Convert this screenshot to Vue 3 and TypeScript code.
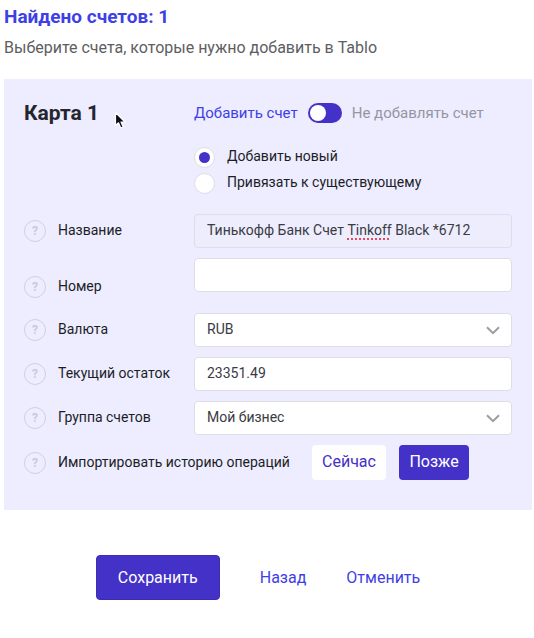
<script setup lang="ts">
import { ref } from 'vue'

type Mode = 'new' | 'existing'

const skipAccount = ref<boolean>(false)
const mode = ref<Mode>('new')
const name = ref<string>('Тинькофф Банк Счет Tinkoff Black *6712')
const accountNumber = ref<string>('')
const currency = ref<string>('RUB')
const balance = ref<string>('23351.49')
const group = ref<string>('Мой бизнес')
const importNow = ref<boolean>(false)
</script>

<template>
  <main class="page">
    <h1 class="heading">Найдено счетов: 1</h1>
    <p class="lead">Выберите счета, которые нужно добавить в Tablo</p>

    <form id="account-form" class="card" @submit.prevent>
      <div class="card-head">
        <h2 class="card-title">Карта 1</h2>
        <label class="switch-row">
          <span class="switch-on">Добавить счет</span>
          <input v-model="skipAccount" class="switch" type="checkbox" role="switch" />
          <span class="switch-off">Не добавлять счет</span>
        </label>
        <svg class="cursor" width="13" height="19" viewBox="0 0 13 19" aria-hidden="true">
          <path d="M1.5 1.5V14.5L4.5 11.8L6.8 17L9.2 16L7 11H11Z" fill="#0c0c18" stroke="#fff" stroke-width="1.2" stroke-linejoin="round" />
        </svg>
      </div>

      <div class="modes">
        <label class="mode">
          <input v-model="mode" class="radio" type="radio" name="mode" value="new" />
          <span class="mode-text">Добавить новый</span>
        </label>
        <label class="mode">
          <input v-model="mode" class="radio" type="radio" name="mode" value="existing" />
          <span class="mode-text">Привязать к существующему</span>
        </label>
      </div>

      <div class="rows">
        <div class="row">
          <button class="help" type="button">?</button>
          <label class="label" for="name">Название</label>
          <div class="field-box">
            <input id="name" v-model="name" class="field field-muted" type="text" spellcheck="false" />
            <div class="spelling" aria-hidden="true">Тинькофф Банк Счет <span class="misspelled">Tinkoff</span></div>
          </div>
        </div>
        <div class="row row-tall">
          <button class="help" type="button">?</button>
          <label class="label" for="number">Номер</label>
          <input id="number" v-model="accountNumber" class="field" type="text" />
        </div>
        <div class="row">
          <button class="help" type="button">?</button>
          <label class="label" for="currency">Валюта</label>
          <div class="field-box">
            <select id="currency" v-model="currency" class="field">
              <option>RUB</option>
            </select>
            <svg class="chevron" width="14" height="9" viewBox="0 0 14 9" aria-hidden="true"><path d="M1 1.2L7 7.2L13 1.2" /></svg>
          </div>
        </div>
        <div class="row">
          <button class="help" type="button">?</button>
          <label class="label" for="balance">Текущий остаток</label>
          <input id="balance" v-model="balance" class="field" type="text" />
        </div>
        <div class="row">
          <button class="help" type="button">?</button>
          <label class="label" for="group">Группа счетов</label>
          <div class="field-box">
            <select id="group" v-model="group" class="field">
              <option>Мой бизнес</option>
            </select>
            <svg class="chevron" width="14" height="9" viewBox="0 0 14 9" aria-hidden="true"><path d="M1 1.2L7 7.2L13 1.2" /></svg>
          </div>
        </div>
        <div class="import-row" role="group" aria-labelledby="import-label">
          <button class="help" type="button">?</button>
          <span id="import-label" class="label import-label">Импортировать историю операций</span>
          <button class="choice" :class="{ chosen: importNow }" type="button" @click="importNow = true">Сейчас</button>
          <button class="choice choice-later" :class="{ chosen: !importNow }" type="button" @click="importNow = false">Позже</button>
        </div>
      </div>
    </form>

    <div class="actions">
      <button class="save" type="submit" form="account-form">Сохранить</button>
      <a class="link" href="#back">Назад</a>
      <a class="link" href="#cancel">Отменить</a>
    </div>
  </main>
</template>

<style>
body {
  background: #fff;
}
</style>

<style scoped>
.page {
  padding: 4px 2px 36px 4px;
  font-family: Roboto, "Noto Sans", sans-serif;
  font-size: 14px;
  line-height: 20px;
  color: #1c1d26;
}

.page * {
  box-sizing: border-box;
}

.heading {
  margin: 0;
  font-size: 19px;
  line-height: 26px;
  font-weight: 700;
  color: #3f3fe6;
}

.lead {
  margin: 6px 0 19px;
  font-size: 16px;
  line-height: 24px;
  color: #5d5e62;
}

.card {
  padding: 20px 20px 30px;
  background: #ededff;
}

.card-head {
  position: relative;
  display: grid;
  grid-template-columns: 158px 1fr;
  column-gap: 12px;
  align-items: center;
}

.card-title {
  margin: 0;
  font-size: 21px;
  line-height: 28px;
  font-weight: 700;
  color: #24252e;
}

.cursor {
  position: absolute;
  left: 90px;
  top: 12px;
}

.switch-row {
  display: flex;
  align-items: center;
  gap: 10px;
  font-size: 15px;
  white-space: nowrap;
}

.switch-on {
  color: #3f3fe6;
}

.switch-off {
  color: #94959f;
}

.switch {
  appearance: none;
  display: flex;
  flex: none;
  width: 34px;
  height: 20px;
  margin: 0;
  padding: 2px;
  border-radius: 10px;
  background: #4431c8;
}

.switch::before {
  content: "";
  width: 16px;
  height: 16px;
  border-radius: 50%;
  background: #fff;
}

.switch:checked {
  justify-content: flex-end;
}

.modes {
  display: grid;
  row-gap: 4px;
  margin: 19px 0 20px 170px;
}

.mode {
  display: flex;
  align-items: center;
  gap: 12px;
  height: 22px;
}

.radio {
  appearance: none;
  display: grid;
  place-items: center;
  flex: none;
  width: 21px;
  height: 21px;
  margin: 0;
  border: 1px solid #dcdce6;
  border-radius: 50%;
  background: #fff;
}

.radio:checked::before {
  content: "";
  width: 11px;
  height: 11px;
  border-radius: 50%;
  background: #4431c8;
}

.rows {
  display: grid;
  row-gap: 10px;
}

.row {
  display: grid;
  grid-template-columns: 22px 124px 1fr;
  column-gap: 12px;
  align-items: center;
}

.row-tall {
  height: 45px;
  align-items: end;
}

.row-tall .field {
  align-self: start;
}

.row-tall .help,
.row-tall .label {
  margin-bottom: 5px;
}

.help {
  flex: none;
  width: 22px;
  height: 22px;
  padding: 0;
  border: 1px solid #d0d0de;
  border-radius: 50%;
  background: transparent;
  font: 700 12px/20px Roboto, sans-serif;
  text-align: center;
  color: #c9c9d8;
}

.label,
.mode-text {
  padding-bottom: 2px;
  white-space: nowrap;
}

.field-box {
  position: relative;
}

.field {
  appearance: none;
  display: block;
  width: 100%;
  height: 34px;
  margin: 0;
  padding: 0 12px 2px;
  border: 1px solid #dfdee6;
  border-radius: 4px;
  background: #fff;
  font: inherit;
  color: #3a3b44;
}

.field-muted {
  background: #ededfd;
}

.spelling {
  position: absolute;
  left: 13px;
  top: 6px;
  color: transparent;
  white-space: nowrap;
  pointer-events: none;
}

.misspelled {
  text-decoration: underline dotted #e5485f 2px;
  text-underline-offset: 3px;
  text-decoration-skip-ink: none;
}

.chevron {
  position: absolute;
  right: 12px;
  top: 13px;
  fill: none;
  stroke: #9c9ca4;
  stroke-width: 2;
  pointer-events: none;
}

.import-row {
  display: flex;
  align-items: center;
}

.import-label {
  min-width: 238px;
  margin: 0 16px 0 12px;
}

.choice {
  width: 74px;
  height: 35px;
  padding: 0 0 2px;
  border: 0;
  border-radius: 4px;
  background: #fff;
  font: inherit;
  font-size: 16px;
  color: #4431c8;
}

.choice-later {
  width: 70px;
  margin-left: 13px;
}

.chosen {
  background: #4431c8;
  color: #fff;
}

.actions {
  display: flex;
  align-items: center;
  justify-content: center;
  gap: 40px;
  margin-top: 45px;
  padding-right: 20px;
  font-size: 16px;
}

.save {
  width: 124px;
  height: 45px;
  padding: 0;
  border: 1px solid #3d2db4;
  border-radius: 4px;
  background: #4431c8;
  font: inherit;
  color: #fff;
}

.link {
  color: #3f3fe6;
  text-decoration: none;
}
</style>
